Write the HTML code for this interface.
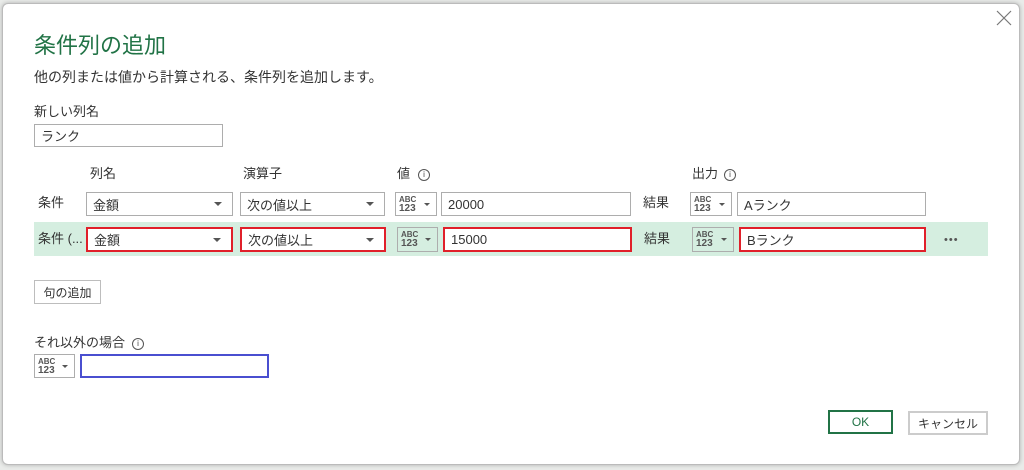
<!DOCTYPE html>
<html><head><meta charset="utf-8"><style>
*{box-sizing:border-box;margin:0;padding:0}
body{width:1024px;height:470px;background:#e9ebe9;position:relative;overflow:hidden;font-family:"Liberation Sans","Noto Sans CJK JP",sans-serif;color:#333;font-size:13px}
.dlg{position:absolute;left:2px;top:3px;width:1018px;height:462px;background:#fff;border:1px solid #bbb;border-radius:6px;box-shadow:0 0 4px rgba(0,0,0,.25)}
.a{position:absolute}
.t{position:absolute;white-space:nowrap;line-height:16px}
.box{position:absolute;border:1px solid #adadad;background:#fff;padding-left:6px;display:flex;align-items:center;font-size:13px}
.red{border:2px solid #e0202a}
.sel:after{content:"";position:absolute;right:10px;top:50%;margin-top:-2px;border-left:4px solid transparent;border-right:4px solid transparent;border-top:4px solid #555}
.ty{position:absolute;border:1px solid #adadad;background:#fff;font-size:8px;line-height:8px;font-weight:bold;color:#555}
.ty span{position:absolute;left:3px}
.ty:after{content:"";position:absolute;right:6px;top:10px;border-left:3.5px solid transparent;border-right:3.5px solid transparent;border-top:3.5px solid #555}
.info{position:absolute;width:12px;height:12px;border:1px solid #555;border-radius:50%;font-size:8px;line-height:10px;text-align:center;color:#444}
.btn{position:absolute;border:1px solid #bdbdbd;background:#fff;display:flex;align-items:center;justify-content:center;font-size:12px}
</style></head><body>
<div class="dlg"></div>
<svg class="a" style="left:996px;top:10px" width="16" height="16"><path d="M1 1L15 15M15 1L1 15" stroke="#777" stroke-width="1.2"/></svg>
<div class="t" style="left:34px;top:33px;font-size:22px;line-height:26px;color:#217346">条件列の追加</div>
<div class="t" style="left:34px;top:69px;font-size:14px">他の列または値から計算される、条件列を追加します。</div>
<div class="t" style="left:34px;top:104px;font-size:13px">新しい列名</div>
<div class="box" style="left:34px;top:124px;width:189px;height:23px">ランク</div>

<div class="t" style="left:90px;top:166px">列名</div>
<div class="t" style="left:243px;top:166px">演算子</div>
<div class="t" style="left:397px;top:166px">値</div><div class="info" style="left:418px;top:169px">i</div>
<div class="t" style="left:692px;top:166px">出力</div><div class="info" style="left:724px;top:169px">i</div>

<div class="t" style="left:38px;top:195px">条件</div>
<div class="box sel" style="left:86px;top:192px;width:147px;height:24px">金額</div>
<div class="box sel" style="left:240px;top:192px;width:145px;height:24px">次の値以上</div>
<div class="ty" style="left:395px;top:192px;width:42px;height:24px"><span style="top:3px">ABC</span><span style="top:11px;font-size:10px;line-height:10px">123</span></div>
<div class="box" style="left:441px;top:192px;width:190px;height:24px">20000</div>
<div class="t" style="left:643px;top:195px">結果</div>
<div class="ty" style="left:690px;top:192px;width:42px;height:24px"><span style="top:3px">ABC</span><span style="top:11px;font-size:10px;line-height:10px">123</span></div>
<div class="box" style="left:737px;top:192px;width:189px;height:24px">Aランク</div>

<div class="a" style="left:34px;top:222px;width:954px;height:34px;background:#d5eee0"></div>
<div class="t" style="left:38px;top:231px">条件 (...</div>
<div class="box sel red" style="left:86px;top:227px;width:147px;height:25px">金額</div>
<div class="box sel red" style="left:240px;top:227px;width:146px;height:25px">次の値以上</div>
<div class="ty" style="left:397px;top:227px;width:41px;height:25px;background:#d5eee0"><span style="top:3px">ABC</span><span style="top:11px;font-size:10px;line-height:10px">123</span></div>
<div class="box red" style="left:443px;top:227px;width:189px;height:25px">15000</div>
<div class="t" style="left:644px;top:231px">結果</div>
<div class="ty" style="left:692px;top:227px;width:42px;height:25px;background:#d5eee0"><span style="top:3px">ABC</span><span style="top:11px;font-size:10px;line-height:10px">123</span></div>
<div class="box red" style="left:739px;top:227px;width:187px;height:25px">Bランク</div>
<div class="t" style="left:944px;top:232px;font-size:11px;letter-spacing:1px;color:#555">•••</div>

<div class="btn" style="left:34px;top:280px;width:67px;height:24px">句の追加</div>
<div class="t" style="left:34px;top:335px">それ以外の場合</div><div class="info" style="left:132px;top:338px">i</div>
<div class="ty" style="left:34px;top:354px;width:41px;height:24px"><span style="top:3px">ABC</span><span style="top:11px;font-size:10px;line-height:10px">123</span></div>
<div class="box" style="left:80px;top:354px;width:189px;height:24px;border:2px solid #4a4fd0"></div>

<div class="btn" style="left:828px;top:410px;width:65px;height:24px;border:2px solid #217346;color:#217346">OK</div>
<div class="btn" style="left:908px;top:411px;width:80px;height:24px;border-width:2px;border-color:#ccc">キャンセル</div>
</body></html>
